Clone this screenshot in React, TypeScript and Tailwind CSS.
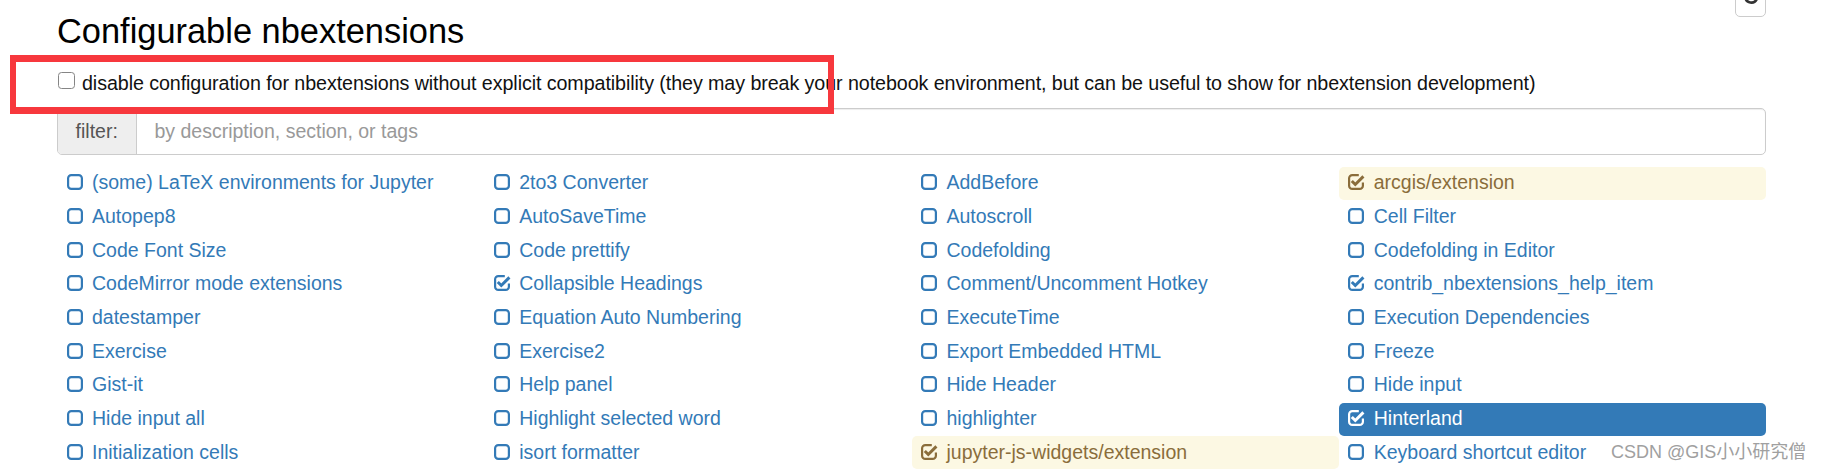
import React from "react";

type Variant = "none" | "warn" | "active";
interface Item {
  label: string;
  checked?: boolean;
  variant?: Variant;
}

const items: Item[] = [
  { label: "(some) LaTeX environments for Jupyter" },
  { label: "2to3 Converter" },
  { label: "AddBefore" },
  { label: "arcgis/extension", checked: true, variant: "warn" },
  { label: "Autopep8" },
  { label: "AutoSaveTime" },
  { label: "Autoscroll" },
  { label: "Cell Filter" },
  { label: "Code Font Size" },
  { label: "Code prettify" },
  { label: "Codefolding" },
  { label: "Codefolding in Editor" },
  { label: "CodeMirror mode extensions" },
  { label: "Collapsible Headings", checked: true },
  { label: "Comment/Uncomment Hotkey" },
  { label: "contrib_nbextensions_help_item", checked: true },
  { label: "datestamper" },
  { label: "Equation Auto Numbering" },
  { label: "ExecuteTime" },
  { label: "Execution Dependencies" },
  { label: "Exercise" },
  { label: "Exercise2" },
  { label: "Export Embedded HTML" },
  { label: "Freeze" },
  { label: "Gist-it" },
  { label: "Help panel" },
  { label: "Hide Header" },
  { label: "Hide input" },
  { label: "Hide input all" },
  { label: "Highlight selected word" },
  { label: "highlighter" },
  { label: "Hinterland", checked: true, variant: "active" },
  { label: "Initialization cells" },
  { label: "isort formatter" },
  { label: "jupyter-js-widgets/extension", checked: true, variant: "warn" },
  { label: "Keyboard shortcut editor" },
];

function SquareIcon() {
  return (
    <svg width="16" height="16" viewBox="0 0 16 16" className="shrink-0">
      <rect x="1.1" y="1.1" width="13.8" height="13.8" rx="3.2" fill="none" stroke="currentColor" strokeWidth="2.2" />
    </svg>
  );
}

function CheckSquareIcon() {
  return (
    <svg width="16" height="16" viewBox="0 0 16 16" className="shrink-0 overflow-visible">
      <path
        d="M10.8 1.1 H4.3 A3.2 3.2 0 0 0 1.1 4.3 V11.7 A3.2 3.2 0 0 0 4.3 14.9 H11.7 A3.2 3.2 0 0 0 14.9 11.7 V8.6"
        fill="none"
        stroke="currentColor"
        strokeWidth="2.2"
      />
      <path d="M3.8 7 L7.3 10.5 L15.4 2.4" fill="none" stroke="currentColor" strokeWidth="3" strokeLinecap="butt" />
    </svg>
  );
}

function RefreshIcon() {
  return (
    <svg width="18" height="18" viewBox="0 0 24 24">
      <path d="M4.5 10 A8 8 0 0 0 19.5 12.5" fill="none" stroke="#333" strokeWidth="3.6" />
      <path d="M0.5 11 L5 6 L8.5 11.5 Z" fill="#333" />
    </svg>
  );
}

function ListItem({ item }: { item: Item }) {
  const v = item.variant ?? "none";
  const cls =
    v === "warn"
      ? "bg-[#fcf8e3] text-[#8a6d3b]"
      : v === "active"
      ? "bg-[#337ab7] text-white"
      : "text-[#337ab7]";
  return (
    <div className={`h-[33px] mb-[0.7px] pb-[2px] flex items-center gap-[9.5px] pl-[9.5px] rounded-[5px] ${cls}`}>
      {item.checked ? <CheckSquareIcon /> : <SquareIcon />}
      <span className="text-[19.5px] leading-[24px] whitespace-nowrap">{item.label}</span>
    </div>
  );
}

export default function App() {
  return (
    <div
      className="relative w-[1829px] h-[469px] overflow-hidden bg-white"
      style={{ fontFamily: '"Liberation Sans", Arial, "Noto Sans CJK SC", sans-serif' }}
    >
      <div className="ml-[57px] w-[1709px]">
        <div className="flex justify-between items-start">
          <h2 className="pt-[11.6px] text-[34.4px] leading-[38px] text-black font-normal">
            Configurable nbextensions
          </h2>
          <button className="-mt-[20px] w-[31px] h-[37px] border border-[#ccc] rounded-[5px] bg-white flex items-center justify-center">
            <RefreshIcon />
          </button>
        </div>

        <div className="mt-[21.7px] flex items-start h-[24px]">
          <span className="mt-[0.4px] ml-[1px] w-[17px] h-[17px] border-[1.5px] border-[#858585] rounded-[3.5px] bg-white shrink-0" />
          <span className="ml-[7px] text-[19.7px] leading-[24px] tracking-[-0.085px] text-[#111] whitespace-nowrap">
            disable configuration for nbextensions without explicit compatibility (they may break your notebook
            environment, but can be useful to show for nbextension development)
          </span>
        </div>

        <div className="mt-[13.2px] h-[46.5px] flex border border-[#ccc] rounded-[5px] shadow-[inset_0_1px_1px_rgba(0,0,0,0.075)] overflow-hidden">
          <div className="w-[78.5px] shrink-0 bg-[#eee] border-r border-[#ccc] flex items-center justify-center text-[19.5px] text-[#555]">
            filter:
          </div>
          <input
            className="flex-1 pl-[18px] text-[19.5px] text-[#555] placeholder:text-[#999] outline-none bg-transparent"
            placeholder="by description, section, or tags"
          />
        </div>

        <div className="mt-[11.8px] grid grid-cols-4">
          {items.map((it) => (
            <ListItem key={it.label} item={it} />
          ))}
        </div>
      </div>

      <div className="absolute left-[10px] top-[55px] w-[824px] h-[59px] border-x-[6px] border-y-[7px] border-[#f7383d] pointer-events-none" />

      <div
        className="absolute left-[1611px] top-[440.5px] text-[18px] leading-[22px] text-[#a0a0a0] whitespace-nowrap"
        style={{ textShadow: "0 0 1px #fff, 0 0 1px #fff" }}
      >
        CSDN @GIS小小研究僧
      </div>
    </div>
  );
}
